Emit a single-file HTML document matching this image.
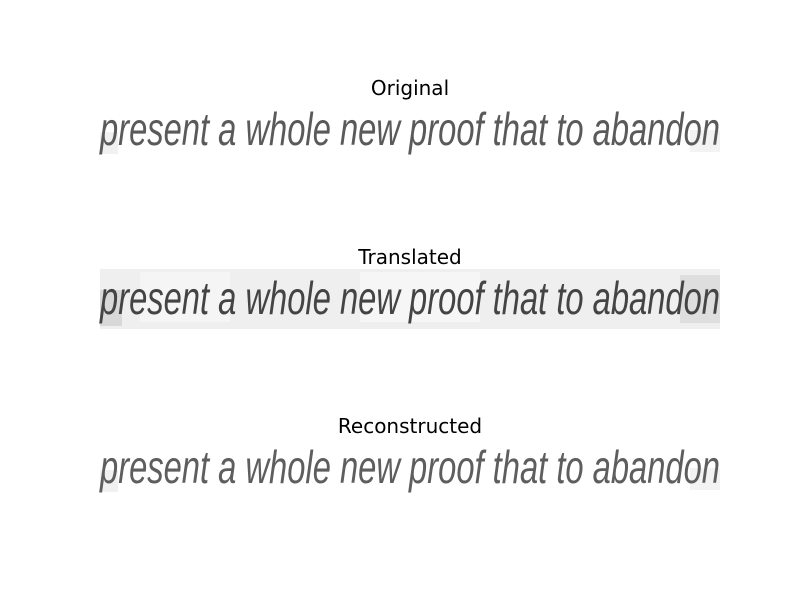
<!DOCTYPE html>
<html><head><meta charset="utf-8"><style>
html,body{margin:0;padding:0;background:#fff;}
body{width:800px;height:600px;overflow:hidden;}
svg{display:block}
</style></head><body>
<svg width="800" height="600" viewBox="0 0 800 600" xmlns="http://www.w3.org/2000/svg">
<rect width="800" height="600" fill="#fff"/>
<g font-family="DejaVu Sans, sans-serif" font-size="20" fill="#000" text-anchor="middle">
<text x="410" y="95">Original</text>
<text x="410" y="264">Translated</text>
<text x="410" y="433">Reconstructed</text>
</g>
<rect x="100" y="132" width="18" height="22" fill="#f1f1f1"/>
<rect x="690" y="130" width="30" height="22" fill="#f3f3f3"/>
<rect x="100" y="269" width="620" height="60" fill="#efefef"/>
<rect x="100" y="290" width="22" height="36" fill="#d8d8d8"/>
<rect x="140" y="272" width="90" height="50" fill="#f5f5f5"/>
<rect x="680" y="275" width="40" height="48" fill="#dedede"/>
<rect x="360" y="272" width="120" height="50" fill="#f6f6f6"/>
<rect x="100" y="470" width="18" height="22" fill="#f1f1f1"/>
<rect x="690" y="468" width="30" height="22" fill="#f3f3f3"/>
<g font-family="Liberation Sans, sans-serif" font-style="italic" font-size="46">
<text x="100" y="145" textLength="620" lengthAdjust="spacingAndGlyphs" fill="#5a5a5a">present a whole new proof that to abandon</text>
<text x="100" y="314" textLength="620" lengthAdjust="spacingAndGlyphs" fill="#444">present a whole new proof that to abandon</text>
<text x="100" y="483" textLength="620" lengthAdjust="spacingAndGlyphs" fill="#5e5e5e">present a whole new proof that to abandon</text>
</g>
</svg>
</body></html>
